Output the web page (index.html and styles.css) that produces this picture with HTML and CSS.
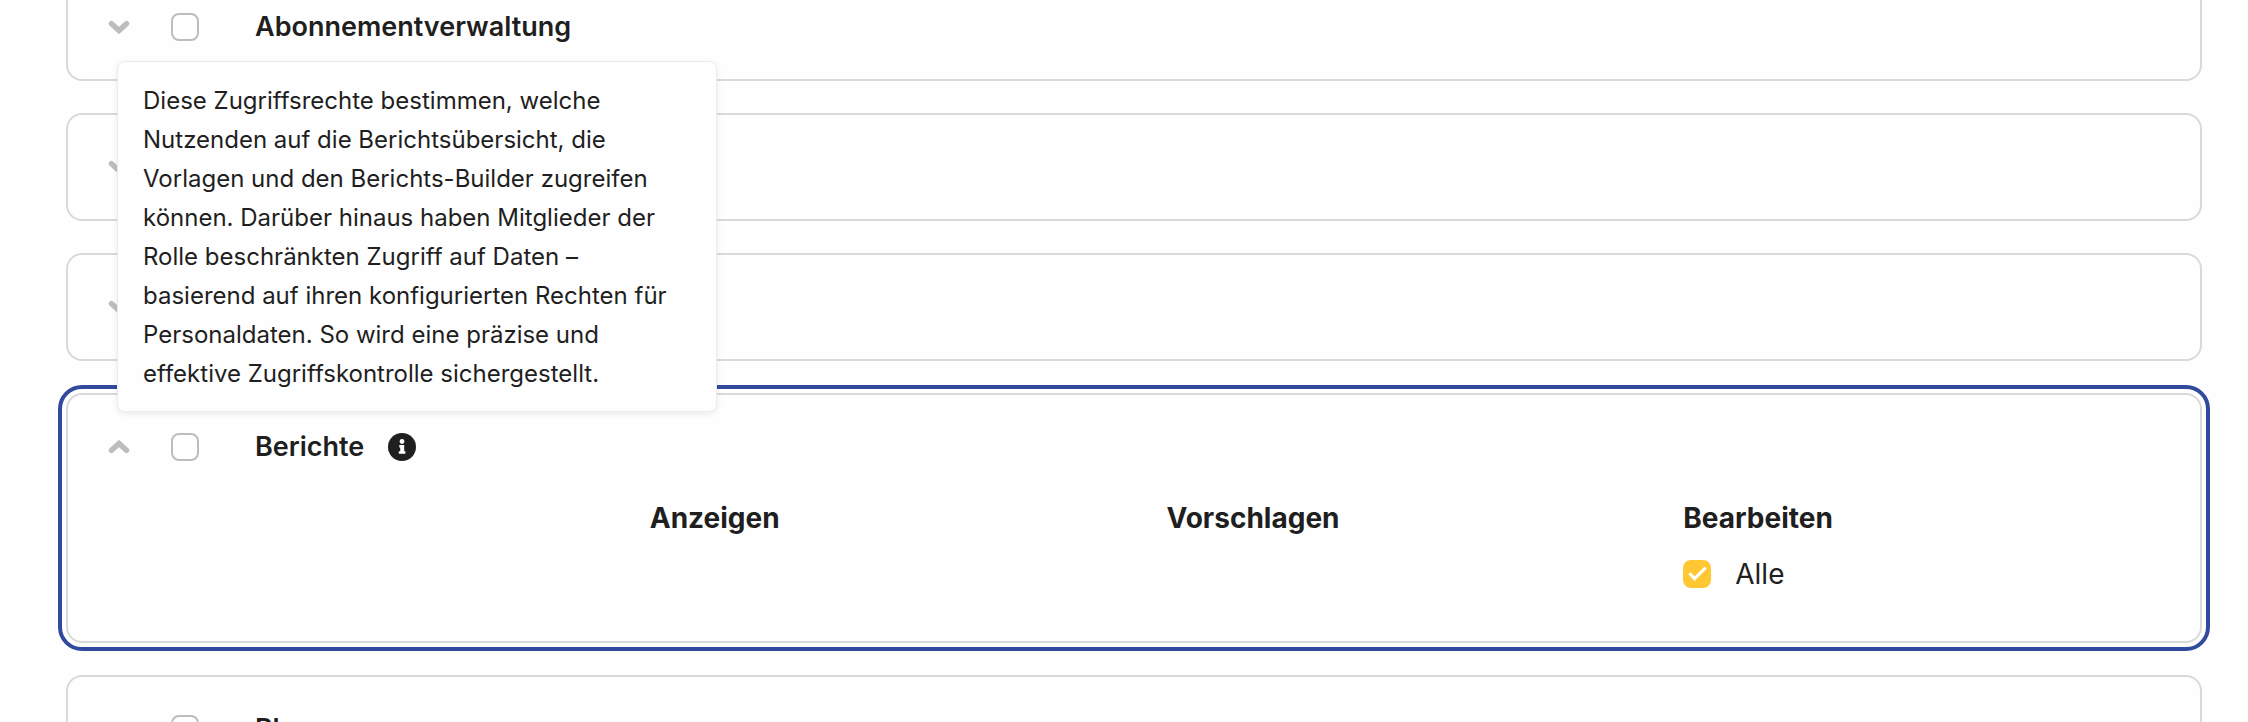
FILE: index.html
```
<!DOCTYPE html>
<html lang="de">
<head>
<meta charset="utf-8">
<title>Zugriffsrechte</title>
<link rel="stylesheet" href="styles.css">
</head>
<body>
<main class="sections">
  <section class="card">
    <div class="card-head">
      <button class="toggle" type="button" aria-label="Aufklappen"><svg class="chevron" viewBox="0 0 20 14"><path d="M3.2 4 10 10.2 16.8 4"/></svg></button>
      <input class="check" type="checkbox" id="abo">
      <label class="title" for="abo">Abonnementverwaltung</label>
    </div>
  </section>
  <section class="card">
    <div class="card-head">
      <button class="toggle" type="button" aria-label="Aufklappen"><svg class="chevron" viewBox="0 0 20 14"><path d="M3.2 4 10 10.2 16.8 4"/></svg></button>
    </div>
  </section>
  <section class="card">
    <div class="card-head">
      <button class="toggle" type="button" aria-label="Aufklappen"><svg class="chevron" viewBox="0 0 20 14"><path d="M3.2 4 10 10.2 16.8 4"/></svg></button>
    </div>
  </section>
  <section class="card card-focused">
    <div class="card-head">
      <button class="toggle" type="button" aria-label="Zuklappen"><svg class="chevron" viewBox="0 0 20 14"><path d="M3.2 10 10 3.8 16.8 10"/></svg></button>
      <input class="check" type="checkbox" id="berichte">
      <label class="title" for="berichte">Berichte</label>
      <button class="info" type="button" aria-label="Info" aria-describedby="tip">
        <svg class="info-icon" viewBox="0 0 28 28"><circle cx="14" cy="14" r="14" fill="#1f1f1f"/><circle cx="14" cy="8.5" r="2.4" fill="#fff"/><path fill="#fff" d="M11.3 12h4.9v6.2h1.2v2.6h-6.6v-2.6h1.4v-3.6h-.9z"/></svg>
      </button>
      <div class="tooltip" id="tip" role="tooltip">Diese Zugriffsrechte bestimmen, welche Nutzenden auf die Berichtsübersicht, die Vorlagen und den Berichts-Builder zugreifen können. Darüber hinaus haben Mitglieder der Rolle beschränkten Zugriff auf Daten – basierend auf ihren konfigurierten Rechten für Personaldaten. So wird eine präzise und effektive Zugriffskontrolle sichergestellt.</div>
    </div>
    <div class="rights">
      <div class="right right-first"><h3 class="right-name">Anzeigen</h3></div>
      <div class="right"><h3 class="right-name">Vorschlagen</h3></div>
      <div class="right">
        <h3 class="right-name">Bearbeiten</h3>
        <label class="option"><input class="check" type="checkbox" checked>Alle</label>
      </div>
    </div>
  </section>
  <section class="card">
    <div class="card-head">
      <button class="toggle" type="button" aria-label="Aufklappen"><svg class="chevron" viewBox="0 0 20 14"><path d="M3.2 4 10 10.2 16.8 4"/></svg></button>
      <input class="check" type="checkbox" id="planung">
      <label class="title" for="planung">Planung</label>
    </div>
  </section>
</main>
</body>
</html>
```
FILE: styles.css
```
*, *::before { box-sizing: border-box; }

body {
  margin: 0;
  height: 100vh;
  overflow: hidden;
  background: #fefefe;
  color: #1f1f1f;
  font-family: Inter, "Liberation Sans", sans-serif;
  font-size: 28px;
  line-height: 38px;
}

button { padding: 0; border: 0; background: none; display: flex; }

/* The list is scrolled so that the first card is cut by the window's top. */
.sections {
  display: flex;
  flex-direction: column;
  gap: 32px;
  margin-top: -27px;
  padding: 0 46px 0 66px;
}

.card {
  flex: none;
  border: 2px solid #d9d9d9;
  border-radius: 16px;
}

.card-focused {
  outline: 4px solid #324a9e;
  outline-offset: 4px;
}

.card-head {
  position: relative;
  display: flex;
  align-items: center;
  min-height: 104px;
  padding: 0 40px;
}

.toggle { margin-right: 41px; }

.chevron {
  width: 22px;
  height: 16px;
  fill: none;
  stroke: #bdbdbd;
  stroke-width: 5;
  stroke-linecap: round;
}

.check {
  appearance: none;
  flex: none;
  width: 28px;
  height: 28px;
  margin: 0;
  border: 2px solid #bdbdbd;
  border-radius: 8px;
  background: #fff;
}

.check:checked {
  display: grid;
  place-items: center;
  border-color: #ffc833;
  background: #ffc833;
}

.check:checked::before {
  content: "";
  width: 17px;
  height: 9px;
  margin-bottom: 5px;
  border: solid #fff;
  border-width: 0 0 3px 3px;
  transform: rotate(-45deg);
}

.title { margin-left: 56px; font-size: 27px; font-weight: 600; }

.info { margin-left: 24px; }

.info-icon { width: 28px; height: 28px; }

.tooltip {
  position: absolute;
  bottom: 87px;
  left: 49px;
  width: 600px;
  padding: 19px 25px 18px;
  border: 1px solid #ececec;
  border-radius: 8px;
  background: #fefefe;
  box-shadow: 0 2px 6px rgba(0, 0, 0, 0.08);
  font-size: 24px;
  line-height: 39px;
}

.rights {
  display: grid;
  grid-template-columns: repeat(4, 1fr);
  min-height: 142px;
  padding: 0 0 48px 65px;
}

.right { display: flex; flex-direction: column; gap: 18px; }

.right-first { grid-column-start: 2; }

.right-name { margin: 0; font-size: 28px; font-weight: 700; }

.option { display: flex; align-items: center; gap: 24px; }
```
